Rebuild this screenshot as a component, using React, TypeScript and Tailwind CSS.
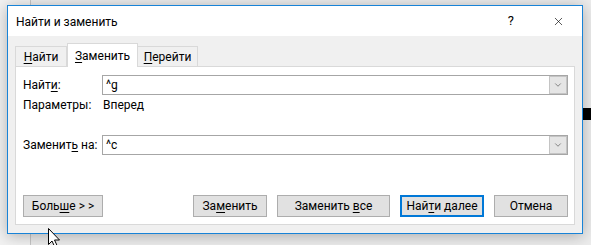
import { ChevronDown, X } from 'lucide-react';

const font = { fontFamily: 'Roboto, "Noto Sans", sans-serif' };

// text with one underlined access key
function Key({ text, at }: { text: string; at: number }) {
  return (
    <span>
      {text.slice(0, at)}
      <span className="underline underline-offset-2">{text[at]}</span>
      {text.slice(at + 1)}
    </span>
  );
}

function Combo({ value }: { value: string }) {
  return (
    <div className="flex h-[20px] flex-1 items-stretch border border-[#a6a6a6] bg-white">
      <div className="flex flex-1 items-center pl-[3px] text-[12px] text-black">{value}</div>
      <div className="flex w-[18px] items-center justify-center border border-[#c4c4c4] bg-[#e5e5e5]">
        <ChevronDown className="h-[10px] w-[10px] text-[#333]" strokeWidth={1.3} />
      </div>
    </div>
  );
}

function Button({
  children,
  width,
  primary,
}: {
  children: React.ReactNode;
  width: string;
  primary?: boolean;
}) {
  return (
    <button
      className={`flex h-[22px] items-center justify-center bg-[#e1e1e1] text-[12px] text-black ${width} ${
        primary ? 'border-2 border-[#0078d7]' : 'border border-[#adadad]'
      }`}
    >
      {children}
    </button>
  );
}

export default function App() {
  return (
    <div className="relative h-[245px] w-[591px] overflow-hidden bg-[#ececec]" style={font}>
      {/* window behind the dialog */}
      <div className="absolute left-0 top-0 h-full w-[30px] bg-[#f2f2f2]" />
      <div className="absolute left-[30px] top-0 h-full w-px bg-[#c6c6c6]" />
      <div className="absolute left-[583px] top-[108px] h-[12px] w-[8px] bg-black" />

      {/* dialog */}
      <div className="absolute left-[7px] top-[5px] flex h-[229px] w-[576px] flex-col border border-[#1883d7] bg-[#f0f0f0] shadow-[0_2px_14px_rgba(0,0,0,0.28)]">
        {/* title bar */}
        <div className="flex h-[30px] items-center bg-white pl-[8px] pr-[17px] text-[12px] text-black">
          <span className="flex-1 pt-[1px]">Найти и заменить</span>
          <span className="mr-[38px] text-[13px]">?</span>
          <X className="h-[13px] w-[13px] text-black" strokeWidth={1.2} />
        </div>

        {/* tabs */}
        <div className="flex flex-1 flex-col px-[7px] pb-[8px] pt-[7px]">
          <div className="flex h-[23px] items-end text-[12px] text-black">
            <div className="flex h-[20px] w-[52px] items-center justify-center border border-b-0 border-[#d9d9d9] bg-[#f0f0f0]">
              <Key text="Найти" at={0} />
            </div>
            <div className="relative z-10 -mb-px flex h-[24px] w-[71px] items-center justify-center border border-b-0 border-[#d9d9d9] bg-white">
              <Key text="Заменить" at={0} />
            </div>
            <div className="flex h-[20px] w-[60px] items-center justify-center border border-b-0 border-l-0 border-[#d9d9d9] bg-[#f0f0f0]">
              <Key text="Перейти" at={0} />
            </div>
          </div>

          {/* panel */}
          <div className="flex flex-1 flex-col border border-[#d9d9d9] bg-white pl-[7px] pr-[6px] pt-[8px] text-[12px] text-black">
            <div className="flex items-center">
              <div className="w-[79px]">
                <Key text="Найти:" at={4} />
              </div>
              <Combo value="^g" />
            </div>
            <div className="mt-px flex h-[18px] items-center">
              <div className="w-[80px]">Параметры:</div>
              <div>Вперед</div>
            </div>
            <div className="mt-[21px] flex items-center">
              <div className="w-[79px]">
                <Key text="Заменить на:" at={7} />
              </div>
              <Combo value="^c" />
            </div>

            <div className="mt-[40px] flex items-center">
              <Button width="w-[80px]">
                <span>
                  Боль<span className="underline underline-offset-2">ш</span>е &gt; &gt;
                </span>
              </Button>
              <div className="flex-1" />
              <div className="flex items-center gap-[10px]">
                <Button width="w-[74px]">
                  <Key text="Заменить" at={2} />
                </Button>
                <Button width="w-[113px]">
                  <Key text="Заменить все" at={9} />
                </Button>
                <Button width="w-[84px]" primary>
                  <Key text="Найти далее" at={3} />
                </Button>
                <Button width="w-[74px]">Отмена</Button>
              </div>
            </div>
          </div>
        </div>
      </div>

      {/* mouse pointer */}
      <svg className="absolute left-[47px] top-[227px]" width="14" height="22" viewBox="0 0 14 22">
        <path
          d="M1.5 1.5 L1.5 17.5 L5 14 L8 20.5 L10.5 19.5 L7.5 13 L12.5 13 Z"
          fill="white"
          stroke="black"
          strokeWidth="1"
          strokeLinejoin="miter"
        />
      </svg>
    </div>
  );
}
